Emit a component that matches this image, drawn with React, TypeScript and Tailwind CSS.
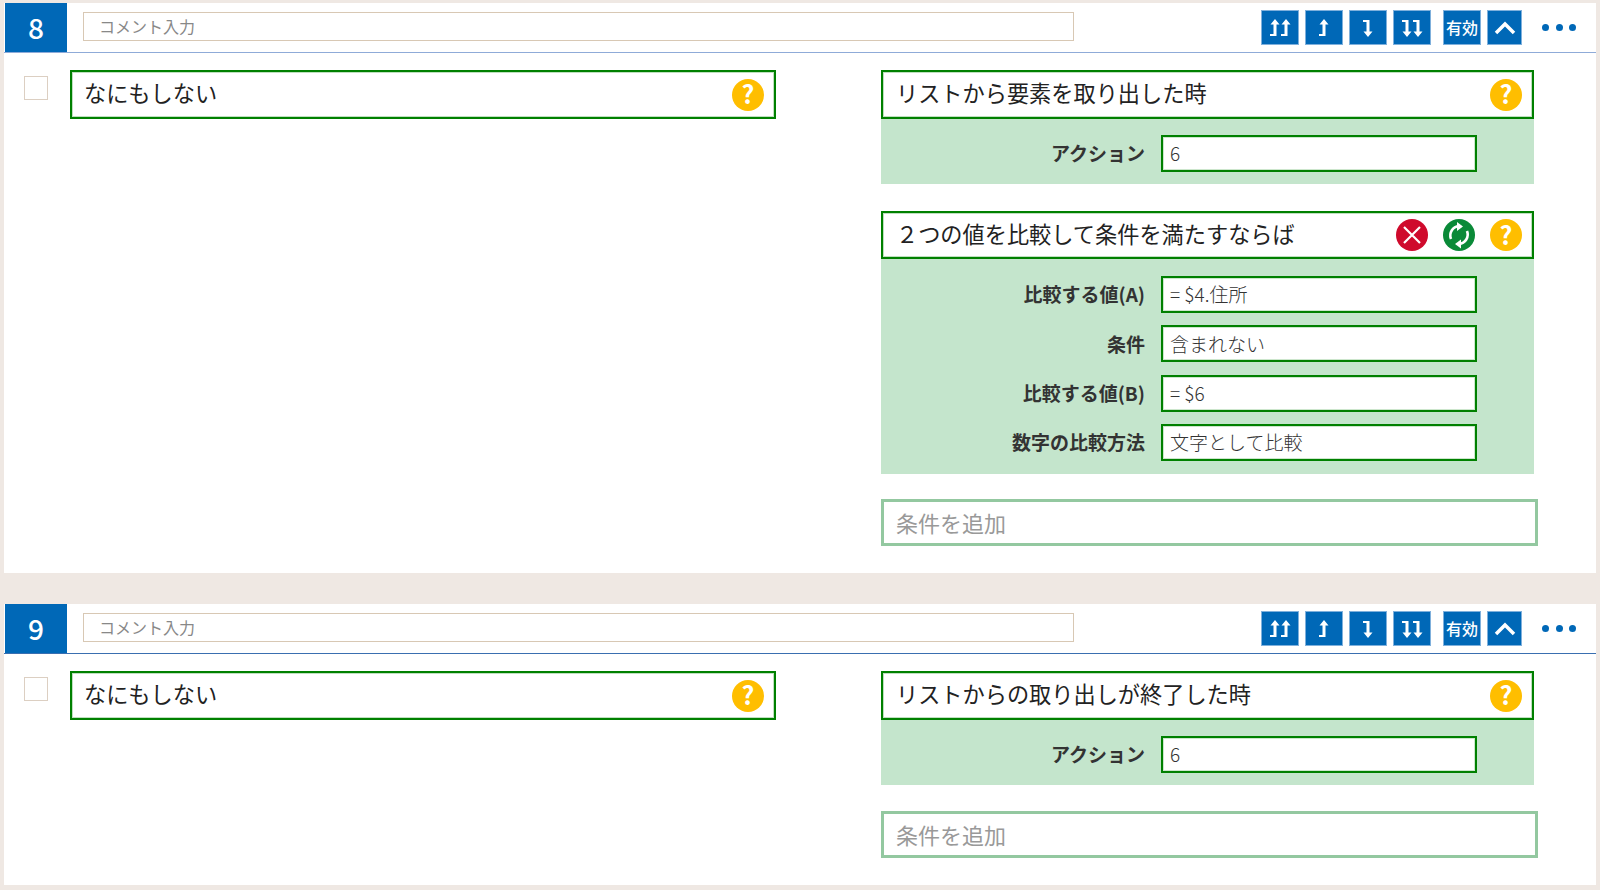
const FONT = "[font-family:'Noto_Sans_CJK_JP','Noto_Sans',sans-serif]"

type ArrowKind = 'upAll' | 'up' | 'down' | 'downAll'

const ARROW_UP = 'M3 16h3.5V6.5H3.5L8 1l4.5 5.500H9.500V18H3z'
const ARROW_DOWN = 'M3 2h6.500v11.500h3L8 19l-4.500-5.500h3V4H3z'

const ArrowIcon = ({ kind }: { kind: ArrowKind }) => {
  const isDouble = kind === 'upAll' || kind === 'downAll'
  const d = kind === 'upAll' || kind === 'up' ? ARROW_UP : ARROW_DOWN
  if (isDouble) {
    return (
      <svg width="24" height="20" viewBox="0 0 24 20" fill="#fff">
        <path d={d} transform="translate(-1 0)" />
        <path d={d} transform="translate(10 0)" />
      </svg>
    )
  }
  return (
    <svg width="16" height="20" viewBox="0 0 16 20" fill="#fff">
      <path d={d} />
    </svg>
  )
}

const ToolButton = ({ children, className }: { children: React.ReactNode; className?: string }) => (
  <div
    className={`flex h-[35px] items-center justify-center border border-[#7fb0dc] bg-[#0068b7] text-white ${className ?? 'w-[38px]'}`}
  >
    {children}
  </div>
)

const HelpIcon = () => (
  <div className="flex h-8 w-8 shrink-0 items-center justify-center rounded-full bg-[#ffbe00] pb-[2px] text-[25px] leading-none font-bold text-white">
    ?
  </div>
)

const CloseIcon = () => (
  <div className="flex h-8 w-8 shrink-0 items-center justify-center rounded-full bg-[#cf0a2c]">
    <svg width="22" height="22" viewBox="0 0 22 22" stroke="#fff" strokeWidth="2.200">
      <path d="M3 3l16 16M19 3L3 19" />
    </svg>
  </div>
)

const RefreshIcon = () => (
  <div className="flex h-8 w-8 shrink-0 items-center justify-center rounded-full bg-[#0a8a38]">
    <svg width="26" height="28" viewBox="0 0 26 28" fill="none" stroke="#fff" strokeWidth="2.600">
      <path d="M5 18a9.500 9.500 0 0 1 8-13" />
      <path d="M21 10a9.500 9.500 0 0 1-8 13" />
      <path d="M11 1l6 4.500-6 4.500z" fill="#fff" stroke="none" />
      <path d="M15 18.500l-6 4.500 6 4.500z" fill="#fff" stroke="none" />
    </svg>
  </div>
)

const ActionHead = ({ title, children, className }: { title: string; children?: React.ReactNode; className?: string }) => (
  <div className={`flex items-center border-2 border-[#008000] bg-white pr-[10px] shadow-[inset_0_0_0_1px_rgba(0,128,0,0.25)] ${className ?? ''}`}>
    <span className="flex-1 pb-[3px] text-[22.200px] text-[#222]">{title}</span>
    <div className="flex items-center gap-[15px]">
      {children}
      <HelpIcon />
    </div>
  </div>
)

const Field = ({ label, value }: { label: string; value: string }) => (
  <div className="flex items-center">
    <span className="w-[280px] pr-4 text-right text-[19px] font-bold text-[#333]">{label}</span>
    <div className="flex h-[37px] w-[316px] items-center border-2 border-[#008000] bg-white px-[7px] text-[19px] font-light text-[#333] shadow-[inset_0_0_0_1px_rgba(0,128,0,0.2)]">
      {value}
    </div>
  </div>
)

const Panel = ({ fields, className }: { fields: { label: string; value: string }[]; className: string }) => (
  <div className={`flex w-[653px] flex-col gap-[12.300px] bg-[#c4e5cc] ${className}`}>
    {fields.map((f) => (
      <Field key={f.label} label={f.label} value={f.value} />
    ))}
  </div>
)

const AddCondition = ({ className }: { className: string }) => (
  <div className={`flex h-[47px] w-[657px] items-center border-[3px] border-[#93c8a0] bg-white px-3 text-[22px] text-[#999] ${className}`}>
    条件を追加
  </div>
)

const RuleHeader = ({ no, line }: { no: number; line: string }) => (
  <div className={`flex h-[50px] items-stretch border-b ${line}`}>
    <div className="ml-px flex w-[62px] items-center justify-center bg-[#0068b7] pb-[2px] text-[28px] font-medium text-white">
      {no}
    </div>
    <div className="mt-[9px] ml-4 flex h-[29px] w-[991px] items-center border border-[#d8c8b4] px-[15px] pb-[2px] text-[16px] text-[#888]">
      コメント入力
    </div>
    <div className="mt-[7px] ml-[187px] flex gap-[6px]">
      <ToolButton><ArrowIcon kind="upAll" /></ToolButton>
      <ToolButton><ArrowIcon kind="up" /></ToolButton>
      <ToolButton><ArrowIcon kind="down" /></ToolButton>
      <ToolButton><ArrowIcon kind="downAll" /></ToolButton>
      <ToolButton className="ml-[6px] w-[38px] pb-[2px] text-[16px] font-medium"><span className="whitespace-nowrap">有効</span></ToolButton>
      <ToolButton className="w-[35px]">
        <svg width="22" height="14" viewBox="0 0 22 14" fill="none" stroke="#fff" strokeWidth="3.500">
          <path d="M2 12l9-9 9 9" />
        </svg>
      </ToolButton>
      <div className="ml-[14px] flex h-[34px] items-center gap-[6.500px]">
        <span className="h-[7px] w-[7px] rounded-full bg-[#0068b7]" />
        <span className="h-[7px] w-[7px] rounded-full bg-[#0068b7]" />
        <span className="h-[7px] w-[7px] rounded-full bg-[#0068b7]" />
      </div>
    </div>
  </div>
)

const LeftColumn = () => (
  <div className="flex w-[772px] shrink-0 items-start">
    <div className="mt-[6px] ml-5 h-6 w-6 border border-[#dccfc2] bg-white" />
    <ActionHead title="なにもしない" className="ml-[22px] h-[49px] w-[706px] flex-none pl-3" />
  </div>
)

export default function App() {
  return (
    <div className={`min-h-[890px] bg-[#efe8e3] px-1 pt-[3px] ${FONT}`}>
      <section className="h-[570px] bg-white">
        <RuleHeader no={8} line="border-[#8fabd8]" />
        <div className="flex pt-[17px]">
          <LeftColumn />
          <div className="ml-[105px]">
            <ActionHead title="リストから要素を取り出した時" className="h-[49px] w-[653px] pl-[13px]" />
            <Panel className="pt-4 pb-3" fields={[{ label: 'アクション', value: '6' }]} />
            <ActionHead title="２つの値を比較して条件を満たすならば" className="mt-[27px] h-[48px] w-[653px] pl-[13px]">
              <CloseIcon />
              <RefreshIcon />
            </ActionHead>
            <Panel
              className="pt-[17px] pb-[13px]"
              fields={[
                { label: '比較する値(A)', value: '= $4.住所' },
                { label: '条件', value: '含まれない' },
                { label: '比較する値(B)', value: '= $6' },
                { label: '数字の比較方法', value: '文字として比較' },
              ]}
            />
            <AddCondition className="mt-[25px]" />
          </div>
        </div>
      </section>
      <section className="mt-[31px] h-[281px] bg-white">
        <RuleHeader no={9} line="border-[#3a6fb0]" />
        <div className="flex pt-[17px]">
          <LeftColumn />
          <div className="ml-[105px]">
            <ActionHead title="リストからの取り出しが終了した時" className="h-[49px] w-[653px] pl-[13px]" />
            <Panel className="pt-4 pb-3" fields={[{ label: 'アクション', value: '6' }]} />
            <AddCondition className="mt-[26px]" />
          </div>
        </div>
      </section>
    </div>
  )
}
